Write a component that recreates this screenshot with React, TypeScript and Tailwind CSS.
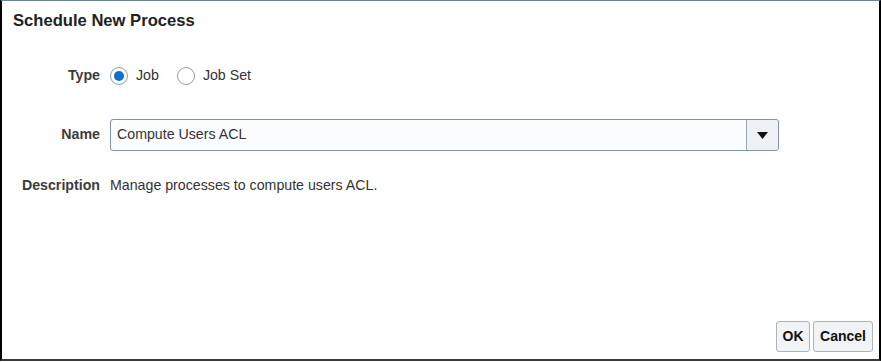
import React from 'react';

const font = { fontFamily: '"Liberation Sans", Arial, sans-serif' };

interface RadioProps {
  label: string;
  checked?: boolean;
}

const Radio = ({ label, checked }: RadioProps) => (
  <label className="flex items-center gap-[8px]">
    <span className="flex h-[18px] w-[18px] items-center justify-center rounded-full border border-[#8e9ca8] bg-white">
      {checked && <span className="h-[10px] w-[10px] rounded-full bg-[#0b72d1]" />}
    </span>
    <span className="text-[14.2px] text-[#333333]">{label}</span>
  </label>
);

const FormRow = ({ label, children, className = '' }: { label: string; children: React.ReactNode; className?: string }) => (
  <div className={`flex items-center ${className}`}>
    <div className="w-[98px] text-right text-[14.2px] font-bold text-[#3c3c3c]">{label}</div>
    <div className="ml-[10px] flex items-center">{children}</div>
  </div>
);

export default function App() {
  return (
    <div
      style={font}
      className="flex h-[361px] w-[881px] flex-col border-t border-l-2 border-r-2 border-b-2 border-t-[#6f8699] border-l-black border-r-black border-b-[#3a3a3a] bg-white"
    >
      <h1 className="pl-[11px] pt-[10px] text-[16.6px] font-bold leading-[20px] text-[#222222]">
        Schedule New Process
      </h1>

      <FormRow label="Type" className="mt-[35px] h-[20px]">
        <div className="flex items-center gap-[18px]">
          <Radio label="Job" checked />
          <Radio label="Job Set" />
        </div>
      </FormRow>

      <FormRow label="Name" className="mt-[33px] h-[32px]">
        <div className="flex h-[32px] w-[669px] rounded-[3px] border border-[#7f93a3] bg-[#fbfcfd]">
          <div className="flex flex-1 items-center pl-[6px] text-[14.2px] text-[#333333]">Compute Users ACL</div>
          <button className="flex w-[32px] items-center justify-center rounded-r-[3px] border-l border-[#9aa8b3] bg-[#eef1f3]">
            <svg width="11" height="7" viewBox="0 0 11 7">
              <path d="M0 0 L11 0 L5.5 7 Z" fill="#111111" />
            </svg>
          </button>
        </div>
      </FormRow>

      <FormRow label="Description" className="mt-[25px] h-[20px]">
        <span className="text-[14.2px] text-[#333333]">Manage processes to compute users ACL.</span>
      </FormRow>

      <div className="mt-auto flex justify-end gap-[3px] pb-[7px] pr-[6px]">
        <button className="h-[31px] w-[34px] rounded-[3px] border border-[#a9b4bd] bg-[#f1f3f4] text-[14px] font-bold text-[#111111]">
          OK
        </button>
        <button className="h-[31px] w-[60px] rounded-[3px] border border-[#a9b4bd] bg-[#f1f3f4] text-[14px] font-bold text-[#111111]">
          Cancel
        </button>
      </div>
    </div>
  );
}
